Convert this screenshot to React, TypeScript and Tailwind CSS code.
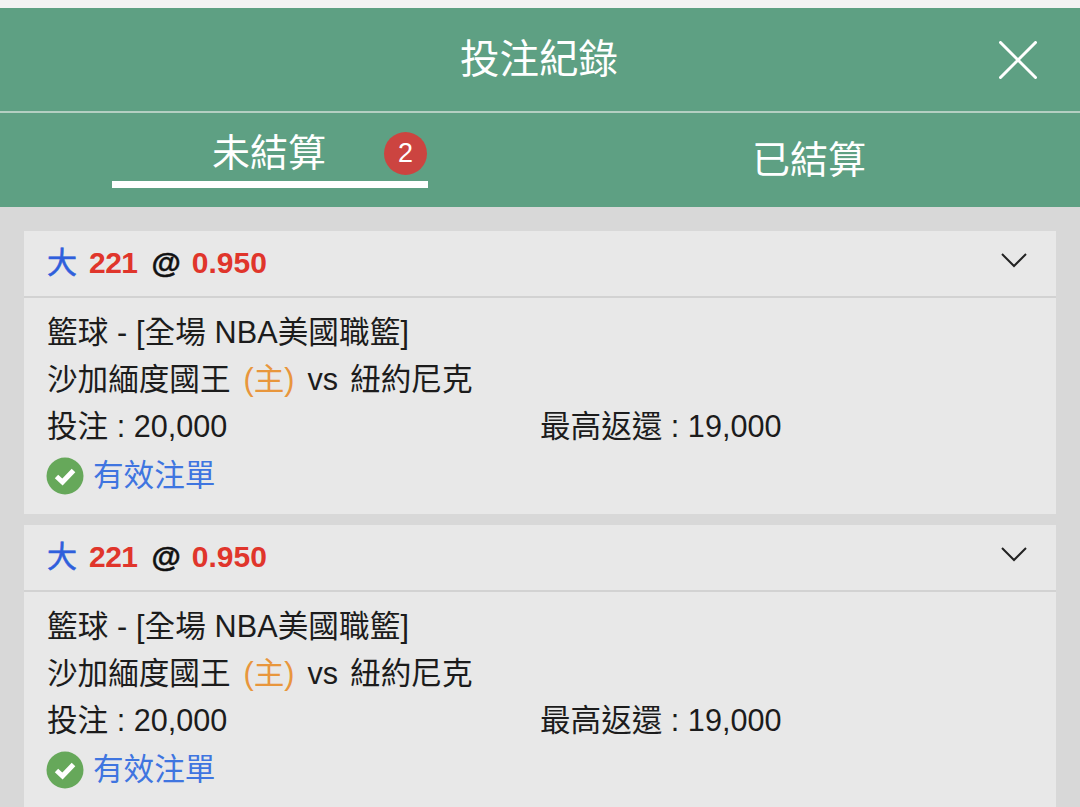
const FONT = "font-['Liberation_Sans','Noto_Sans_CJK_TC',sans-serif]";

function Card() {
  return (
    <div className="bg-[#e8e8e8]">
      <div className="flex h-[65px] items-center justify-between pl-[23px] pr-[28px]">
        <div className="-mt-[1px] flex items-center text-[30px] font-bold leading-none">
          <span className="font-normal text-[#2f5fdc] [-webkit-text-stroke:0.6px_#2f5fdc]">大</span>
          <span className="ml-[12px] tracking-[-0.5px] text-[#e0352b]">221</span>
          <span className="ml-[14px] text-[#111] [-webkit-text-stroke:0.5px_#111]">@</span>
          <span className="ml-[11px] text-[#e0352b]">0.950</span>
        </div>
        <svg width="28" height="18" viewBox="0 0 28 18" fill="none" className="-mt-[7px]">
          <path d="M2 3 L14 15 L26 3" stroke="#222" strokeWidth="2" />
        </svg>
      </div>
      <div className="h-[2px] bg-[#d2d2d2]" />
      <div className="pl-[23px] pt-[11px] pb-[14px] text-[30.6px] leading-[47px] text-[#1c1c1c]">
        <div className="tracking-[0.1px]">籃球 - [全場 NBA美國職籃]</div>
        <div className="flex">
          <span>沙加緬度國王</span>
          <span className="ml-[13px] text-[#e8963c]">(主)</span>
          <span className="ml-[13px]">vs</span>
          <span className="ml-[12px]">紐約尼克</span>
        </div>
        <div className="grid grid-cols-[493px_1fr]">
          <div>投注 : 20,000</div>
          <div>最高返還 : 19,000</div>
        </div>
        <div className="mt-[1px] flex h-[49px] items-center text-[#3f75e0]">
          <svg width="38" height="38" viewBox="0 0 38 38" className="-ml-[1px] mr-[9px] shrink-0">
            <circle cx="19" cy="19" r="18.5" fill="#66a85a" />
            <path d="M10.5 19.5 L16.5 25 L27.5 13.5" fill="none" stroke="#fff" strokeWidth="5" />
          </svg>
          <span>有效注單</span>
        </div>
      </div>
    </div>
  );
}

export default function App() {
  return (
    <div className={`${FONT} h-[807px] w-[1080px] overflow-hidden bg-[#d8d8d8]`}>
      <div className="h-[8px] bg-[#f3f3f3]" />
      <div className="relative flex h-[103px] items-center justify-center bg-[#5ea083] pr-[2px] text-[39.5px] text-white">
        <span>投注紀錄</span>
        <svg width="38" height="38" viewBox="0 0 38 38" className="absolute left-[999px] top-[33px]">
          <path d="M1.5 1.5 L36.5 36.5 M36.5 1.5 L1.5 36.5" stroke="#fff" strokeWidth="3" strokeLinecap="round" />
        </svg>
      </div>
      <div className="h-[2px] bg-[#b4cfc2]" />
      <div className="grid h-[94px] grid-cols-2 bg-[#5ea083] text-[38px] text-white">
        <div className="relative flex justify-center pr-[2px] pt-[15px]">
          <span className="leading-[50px]">未結算</span>
          <span className="absolute left-[384px] top-[19px] flex h-[43px] w-[43px] items-center justify-center rounded-full bg-[#cc4440] text-[27px]">2</span>
          <span className="absolute left-[112px] top-[68px] h-[7px] w-[316px] bg-white" />
        </div>
        <div className="flex justify-center pt-[22px]">
          <span className="pr-[2px] leading-[50px]">已結算</span>
        </div>
      </div>
      <div className="flex flex-col gap-[11px] px-[24px] pt-[24px]">
        <Card />
        <Card />
      </div>
    </div>
  );
}
